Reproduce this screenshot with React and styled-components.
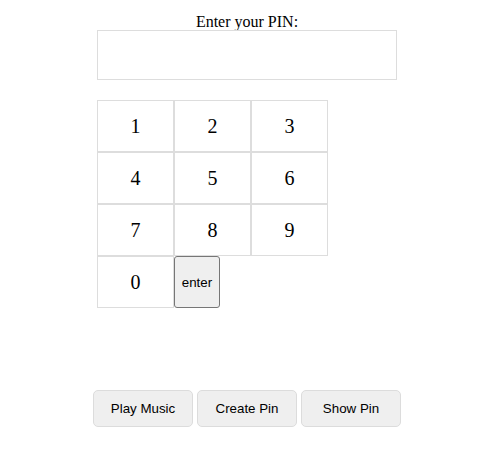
import React, { useState } from 'react'
import styled, { createGlobalStyle } from 'styled-components'

const GlobalStyle = createGlobalStyle`
  body {
    margin: 8px;
    background: #fff;
    font-family: "Liberation Serif", "Times New Roman", serif;
  }
`

const keys = [
  ['1', '2', '3'],
  ['4', '5', '6'],
  ['7', '8', '9'],
]

export default function App() {
  const [pin, setPin] = useState('')

  const press = (d) => setPin((p) => p + d)

  return (
    <Contenedor>
      <GlobalStyle />
      <Titulo>Enter your PIN:</Titulo>
      <Pantalla>{pin}</Pantalla>
      <Teclado>
        {keys.map((row, i) => (
          <Fila key={i}>
            {row.map((k) => (
              <Tecla key={k} onClick={() => press(k)}>{k}</Tecla>
            ))}
          </Fila>
        ))}
        <Fila>
          <Tecla onClick={() => press('0')}>0</Tecla>
          <Enter>enter</Enter>
        </Fila>
      </Teclado>
      <Acciones>
        <Accion>Play Music</Accion>
        <Accion>Create Pin</Accion>
        <Accion>Show Pin</Accion>
      </Acciones>
    </Contenedor>
  )
}

const Contenedor = styled.div`
  width: 300px;
  margin-left: 89px;
  padding-top: 5px;
  display: flex;
  flex-direction: column;
`

const Titulo = styled.div`
  font-size: 16px;
  line-height: 17px;
  text-align: center;
  color: #000;
`

const Pantalla = styled.div`
  box-sizing: border-box;
  height: 50px;
  border: 1px solid #ddd;
  font-size: 20px;
  line-height: 48px;
  text-align: center;
`

const Teclado = styled.div`
  margin-top: 20px;
  display: flex;
  flex-direction: column;
`

const Fila = styled.div`
  display: flex;
`

const Tecla = styled.div`
  width: 75px;
  height: 50px;
  border: 1px solid #ddd;
  font-size: 20px;
  line-height: 50px;
  text-align: center;
  color: #000;
  cursor: pointer;
`

const Enter = styled.button`
  width: 46px;
  height: 52px;
  padding: 1px 6px;
  font-family: Arial, "Liberation Sans", sans-serif;
  font-size: 13.33px;
  color: #000;
  background: #efefef;
  border: 1px solid #767676;
  border-radius: 3px;
`

const Acciones = styled.div`
  margin-top: 82px;
  display: flex;
  justify-content: center;
  gap: 4px;
`

const Accion = styled.button`
  flex: 0 0 auto;
  width: 100px;
  height: 37px;
  font-family: Arial, "Liberation Sans", sans-serif;
  font-size: 13.33px;
  color: #000;
  background: #efefef;
  border: 1px solid #dcdcdc;
  border-radius: 5px;
`
